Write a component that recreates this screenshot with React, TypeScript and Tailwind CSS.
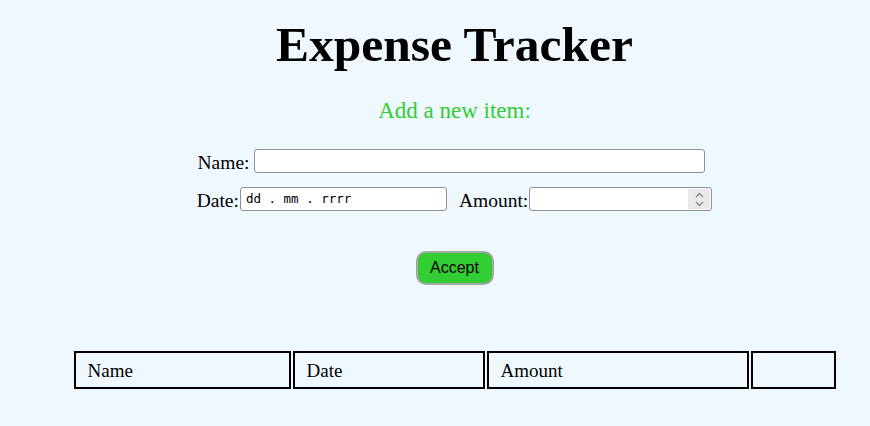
import React from "react";

export default function App() {
  return (
    <div className="min-h-screen w-full bg-[#f0f8ff] pl-[39px] text-black font-['Liberation_Serif','Times_New_Roman',serif]">
      <h1 className="pt-[18px] text-center text-[49.5px] font-bold leading-[53px]">Expense Tracker</h1>
      <p className="mt-[27px] text-center text-[23px] leading-[25px] text-[#32cd32]">Add a new item:</p>

      <div className="mt-[26px] flex justify-center">
        <div className="mr-[6px] flex items-end text-[19.5px]">
          <span className="leading-[21px]">Name:</span>
          <div className="ml-[5px] h-[24px] w-[451px] rounded-[3px] border border-[#8f8f9d] bg-white" />
        </div>
      </div>

      <div className="mt-[14px] flex justify-center">
        <div className="flex items-end text-[19.5px]">
          <span className="leading-[21px]">Date:</span>
          <div className="ml-[1px] flex h-[24px] w-[207px] items-center rounded-[3px] border border-[#8f8f9d] bg-white pl-[5px] font-['DejaVu_Sans_Mono',monospace] text-[12.5px] text-black">
            dd . mm . rrrr
          </div>
          <span className="ml-[12px] leading-[21px]">Amount:</span>
          <div className="ml-[1px] flex h-[24px] w-[183px] justify-end rounded-[3px] border border-[#8f8f9d] bg-white p-[1px]">
            <div className="flex w-[22px] flex-col items-center justify-center gap-[3px] bg-[#e9e9ed]">
              <svg width="9" height="6" viewBox="0 0 9 6" fill="none">
                <path d="M1 5 L4.5 1.5 L8 5" stroke="#8a8a8a" strokeWidth="1.3" />
              </svg>
              <svg width="9" height="6" viewBox="0 0 9 6" fill="none">
                <path d="M1 1 L4.5 4.5 L8 1" stroke="#8a8a8a" strokeWidth="1.3" />
              </svg>
            </div>
          </div>
        </div>
      </div>

      <div className="mt-[40px] flex justify-center">
        <button className="flex h-[34px] w-[78px] items-center justify-center rounded-[10px] border-2 border-[#a6a6a6] bg-[#32cd32] font-['Liberation_Sans',Arial,sans-serif] text-[16px] leading-[18px] text-black">
          Accept
        </button>
      </div>

      <div className="mt-[66px] flex justify-center">
        <div className="flex gap-[2px] text-[19px]">
          <div className="flex h-[38px] w-[217px] items-center border-2 border-black pl-[12px] leading-[21px]">Name</div>
          <div className="flex h-[38px] w-[192px] items-center border-2 border-black pl-[12px] leading-[21px]">Date</div>
          <div className="flex h-[38px] w-[262px] items-center border-2 border-black pl-[12px] leading-[21px]">Amount</div>
          <div className="h-[38px] w-[85px] border-2 border-black" />
        </div>
      </div>
    </div>
  );
}
